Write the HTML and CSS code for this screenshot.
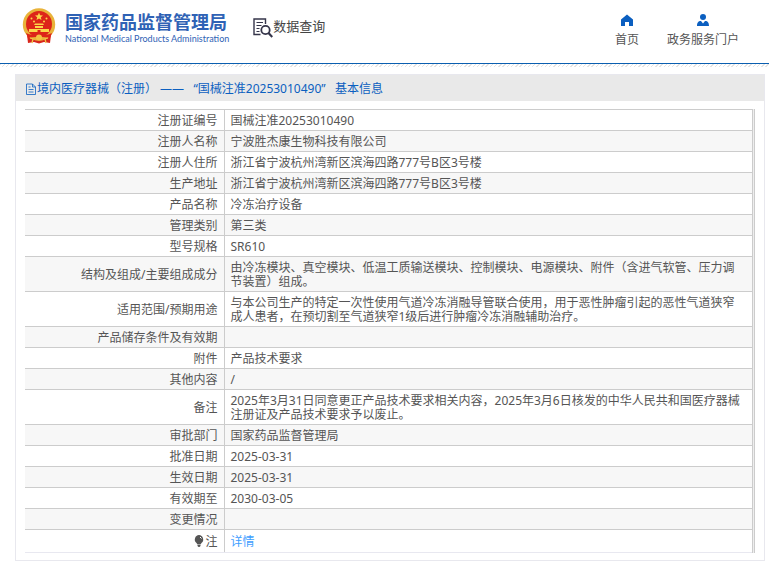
FILE: index.html
```html
<!DOCTYPE html>
<html lang="zh-CN">
<head>
    <meta charset="UTF-8">
    <meta name="viewport" content="width=device-width, initial-scale=1.0">
    <title>国家药品监督管理局 数据查询</title>
    <link rel="stylesheet" href="styles.css">
</head>
<body>
    <header class="header">
        <a href="#" class="logo">
            <svg class="emblem" viewBox="0 0 34 36" aria-hidden="true">
                <path d="M5 27 L29 27 L28 35 L22 34 L17 35.5 L12 34 L6 35 Z" fill="#d8261c"/>
                <circle cx="17" cy="16.5" r="16.2" fill="#e9b33a"/>
                <circle cx="17" cy="16" r="13" fill="#dd2519"/>
                <path d="M17 4.5l1.1 2.7 2.9.2-2.2 1.9.7 2.8-2.5-1.5-2.5 1.5.7-2.8L13 7.400l2.900-.2z" fill="#fbd84a"/>
                <g fill="#fbd84a">
                    <circle cx="9.500" cy="10.500" r="1"/>
                    <circle cx="12" cy="13.500" r="1"/>
                    <circle cx="22" cy="13.500" r="1"/>
                    <circle cx="24.500" cy="10.500" r="1"/>
                    <path d="M12 17l1-1.500h8l1 1.500zM13 18h8v2h-8zM7 21h20v3H7z"/>
                </g>
                <path d="M15.500 22h3v2h-3z" fill="#dd2519"/>
                <path d="M4 25c4 2 8 2 13 2s9 0 13-2l-2 5c-3-1-7-1-11-1s-8 0-11 1z" fill="#dd2519"/>
                <circle cx="17" cy="29.500" r="3" fill="#f3c544"/>
                <path d="M8 30l3 1-1 4M26 30l-3 1 1 4" fill="none" stroke="#f3c544" stroke-width="1.300"/>
            </svg>
            <span class="logo-text">
                <strong>国家药品监督管理局</strong>
                <span class="logo-en">National Medical Products Administration</span>
            </span>
        </a>
        <div class="query">
            <svg class="query-icon" viewBox="0 0 20 20" fill="none" stroke="#35354a" aria-hidden="true">
                <path d="M7.500 16.500H1V1h11.500v5" stroke-width="1.400"/>
                <path d="M3.500 4.500h6.500M3.500 7.500h5M3.500 10.500h3M3.500 13.500h3" stroke-width="1.100"/>
                <circle cx="12.500" cy="12" r="4.200" stroke-width="1.800"/>
                <path d="M15.500 15l3.800 4" stroke-width="2.200"/>
            </svg>
            <span>数据查询</span>
        </div>
        <nav class="nav">
            <a href="#">
                <svg viewBox="0 0 12 12" aria-hidden="true"><path d="M6 .5L0 5.500V12h4V8h4v4h4V5.500z" fill="#0b5fc0"/></svg>
                <span>首页</span>
            </a>
            <a href="#">
                <svg viewBox="0 0 12 12" aria-hidden="true"><circle cx="6" cy="3" r="3" fill="#0b5fc0"/><path d="M0 12c0-3 1-5 4-5l2 2.500L8 7c3 0 4 2 4 5z" fill="#0b5fc0"/></svg>
                <span>政务服务门户</span>
            </a>
        </nav>
    </header>
    <div class="hatch"></div>

    <main class="panel">
        <h1 class="panel-title">
            <svg viewBox="0 0 12 12" fill="none" stroke="#0b5fc0" stroke-width=".8" aria-hidden="true"><path d="M1.500 1H7.500L10.500 4v7.500h-9zM7.500 1v3h3M3.500 4h2M3.500 6.500h5M3.500 9h5"/></svg>
            <span>境内医疗器械（注册） ——&nbsp;&nbsp; “国械注准20253010490”&nbsp;&nbsp; 基本信息</span>
        </h1>
        <div class="panel-body">
            <table class="detail">
                <tbody>
                    <tr><th scope="row">注册证编号</th><td>国械注准20253010490</td></tr>
                    <tr><th scope="row">注册人名称</th><td>宁波胜杰康生物科技有限公司</td></tr>
                    <tr><th scope="row">注册人住所</th><td>浙江省宁波杭州湾新区滨海四路777号B区3号楼</td></tr>
                    <tr><th scope="row">生产地址</th><td>浙江省宁波杭州湾新区滨海四路777号B区3号楼</td></tr>
                    <tr><th scope="row">产品名称</th><td>冷冻治疗设备</td></tr>
                    <tr><th scope="row">管理类别</th><td>第三类</td></tr>
                    <tr><th scope="row">型号规格</th><td>SR610</td></tr>
                    <tr><th scope="row">结构及组成/主要组成成分</th><td>由冷冻模块、真空模块、低温工质输送模块、控制模块、电源模块、附件（含进气软管、压力调节装置）组成。</td></tr>
                    <tr><th scope="row">适用范围/预期用途</th><td>与本公司生产的特定一次性使用气道冷冻消融导管联合使用，用于恶性肿瘤引起的恶性气道狭窄成人患者，在预切割至气道狭窄1级后进行肿瘤冷冻消融辅助治疗。</td></tr>
                    <tr><th scope="row">产品储存条件及有效期</th><td></td></tr>
                    <tr><th scope="row">附件</th><td>产品技术要求</td></tr>
                    <tr><th scope="row">其他内容</th><td>/</td></tr>
                    <tr><th scope="row">备注</th><td>2025年3月31日同意更正产品技术要求相关内容，2025年3月6日核发的中华人民共和国医疗器械注册证及产品技术要求予以废止。</td></tr>
                    <tr><th scope="row">审批部门</th><td>国家药品监督管理局</td></tr>
                    <tr><th scope="row">批准日期</th><td>2025-03-31</td></tr>
                    <tr><th scope="row">生效日期</th><td>2025-03-31</td></tr>
                    <tr><th scope="row">有效期至</th><td>2030-03-05</td></tr>
                    <tr><th scope="row">变更情况</th><td></td></tr>
                    <tr class="note">
                        <th scope="row"><svg viewBox="0 0 10 12" aria-hidden="true"><path d="M5 0a4.500 4.500 0 0 1 2.500 8L6.500 9.500h-3L2.500 8A4.500 4.500 0 0 1 5 0zM3.500 10h3v1l-1 1h-1l-1-1z" fill="#555"/><path d="M6 2l1.500 1.500" stroke="#fff"/></svg>注</th>
                        <td><a href="#">详情</a></td>
                    </tr>
                </tbody>
            </table>
        </div>
    </main>
</body>
</html>
```
FILE: styles.css
```css
* {
    margin: 0;
    padding: 0;
    box-sizing: border-box;
}

body {
    background: #fff;
    font-family: "Noto Sans", "Noto Sans CJK SC", sans-serif;
    font-size: 12px;
    line-height: 14px;
    color: #555;
}

a {
    text-decoration: none;
}

.header {
    display: flex;
    align-items: flex-start;
    min-height: 64px;
    padding: 8px 30px 0 22px;
    border-bottom: 1px solid #0b5fb0;
}

.logo {
    display: flex;
    gap: 9px;
    color: #2f62b5;
}

.emblem {
    width: 34px;
    height: 36px;
}

.logo-text {
    display: flex;
    flex-direction: column;
    padding-top: 4px;
    white-space: nowrap;
}

.logo-text strong {
    font-size: 18px;
    line-height: 20px;
}

.logo-en {
    font-family: Lato, sans-serif;
    font-size: 9px;
    line-height: 14px;
}

.query {
    display: flex;
    margin-left: 24px;
    padding-top: 10px;
    font-size: 13px;
    line-height: 16px;
    color: #444;
    white-space: nowrap;
}

.query-icon {
    width: 20px;
    height: 20px;
}

.nav {
    display: flex;
    gap: 28px;
    margin-left: auto;
    padding-top: 6px;
}

.nav a {
    display: flex;
    flex-direction: column;
    align-items: center;
    gap: 7px;
    color: #555;
}

.nav svg {
    width: 12px;
    height: 12px;
}

.hatch {
    height: 3px;
    background: repeating-linear-gradient(135deg, #e4e4e4 0 1px, #fff 1px 3px);
}

.panel {
    margin: 7px 4px 5px 15px;
    border: 1px solid #e8e8ee;
}

.panel-title {
    display: flex;
    align-items: center;
    padding: 7px 9px 5px;
    background: #e9e9e9;
    font-size: 12px;
    font-weight: normal;
    color: #0b5fc0;
}

.panel-title svg {
    width: 12px;
    height: 12px;
}

.panel-body {
    margin: 8px 9px 7px;
    border-right: 3px double #ccc;
    background: #eee;
}

.detail {
    width: 100%;
    border-collapse: collapse;
    table-layout: fixed;
    background: #fff;
}

.detail th,
.detail td {
    height: 21px;
    padding: 4px 7px 2px 6px;
    border-top: 1px solid #ccc;
}

.detail th {
    width: 199px;
    padding-right: 6px;
    border-right: 1px solid #ccc;
    font-weight: normal;
    text-align: right;
}

.detail tr:nth-child(even) {
    background: #f7f7f7;
}

.detail .note th,
.detail .note td {
    height: 23px;
    border-bottom: 1px solid #e8e8f0;
}

.detail svg {
    width: 10px;
    height: 12px;
    margin-right: 1px;
    vertical-align: -1px;
}

.detail a {
    color: #409eff;
}
```
